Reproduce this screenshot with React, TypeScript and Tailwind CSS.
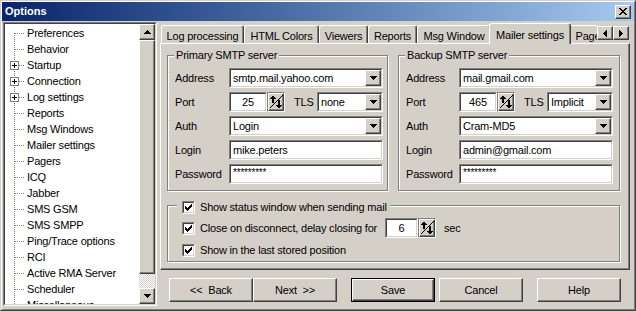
import React from 'react';

const raised =
  'border border-t-white border-l-white border-r-[#404040] border-b-[#404040] shadow-[inset_-1px_-1px_0_#808080] bg-[#d4d0c8]';
const etched = 'border border-[#808080] shadow-[inset_1px_1px_0_#fff,1px_1px_0_#fff]';

const treeItems: { label: string; plus?: boolean }[] = [
  { label: 'Preferences' },
  { label: 'Behavior' },
  { label: 'Startup', plus: true },
  { label: 'Connection', plus: true },
  { label: 'Log settings', plus: true },
  { label: 'Reports' },
  { label: 'Msg Windows' },
  { label: 'Mailer settings' },
  { label: 'Pagers' },
  { label: 'ICQ' },
  { label: 'Jabber' },
  { label: 'SMS GSM' },
  { label: 'SMS SMPP' },
  { label: 'Ping/Trace options' },
  { label: 'RCI' },
  { label: 'Active RMA Server' },
  { label: 'Scheduler' },
  { label: 'Miscellaneous' },
];

const tabs = [
  { label: 'Log processing', w: 'w-[83px]' },
  { label: 'HTML Colors', w: 'w-[75px]' },
  { label: 'Viewers', w: 'w-[49px]' },
  { label: 'Reports', w: 'w-[49px]' },
  { label: 'Msg Window', w: 'w-[74px]' },
  { label: 'Mailer settings', w: 'w-[82px]', active: true },
  { label: 'Page', w: 'w-[38px]' },
];

function Sunken({ className = '', inner = '', children }: { className?: string; inner?: string; children?: React.ReactNode }) {
  return (
    <div className={`border border-t-[#808080] border-l-[#808080] border-r-white border-b-white ${className}`}>
      <div className={`h-full border border-t-[#404040] border-l-[#404040] border-r-[#d4d0c8] border-b-[#d4d0c8] ${inner}`}>
        {children}
      </div>
    </div>
  );
}

function DownTri() {
  return (
    <svg width="7" height="4" viewBox="0 0 7 4" shapeRendering="crispEdges">
      <path d="M0 0h7v1H0zM1 1h5v1H1zM2 2h3v1H2zM3 3h1v1H3z" fill="#000" />
    </svg>
  );
}

function UpTri() {
  return (
    <svg width="7" height="4" viewBox="0 0 7 4" shapeRendering="crispEdges">
      <path d="M3 0h1v1H3zM2 1h3v1H2zM1 2h5v1H1zM0 3h7v1H0z" fill="#000" />
    </svg>
  );
}

function Combo({ value }: { value: string }) {
  return (
    <Sunken className="h-[20px] w-full" inner="bg-white flex items-center">
      <span className="flex-1 pl-[2px] leading-none truncate">{value}</span>
      <div className={`${raised} w-[16px] h-full flex items-center justify-center`}>
        <DownTri />
      </div>
    </Sunken>
  );
}

function Edit({ value, small }: { value: string; small?: boolean }) {
  return (
    <Sunken className="h-[20px] w-full" inner="bg-white flex items-center">
      <span className={`pl-[2px] leading-none ${small ? 'text-[10px] -mt-[3px]' : ''}`}>{value}</span>
    </Sunken>
  );
}

function SpinGlyph() {
  return (
    <svg width="14" height="14" viewBox="0 0 14 14" shapeRendering="crispEdges">
      <line x1="0.5" y1="13.5" x2="13.5" y2="0.5" stroke="#000" />
      <path d="M3 1h2v1H3zM2 2h4v1H2zM1 3h6v1H1zM3 4h2v4H3z" fill="#000" />
      <path d="M9 5h2v5H9zM7 10h6v1H7zM8 11h4v1H8zM9 12h2v1H9z" fill="#000" />
    </svg>
  );
}

function Spin({ value, editW }: { value: string; editW: string }) {
  return (
    <div className="flex h-[20px]">
      <Sunken className={`h-full ${editW}`} inner="bg-white flex items-center justify-center">
        <span className="leading-none">{value}</span>
      </Sunken>
      <div className="h-full w-[18px] border border-t-[#808080] border-l-[#808080] border-r-white border-b-white">
        <div className={`${raised} h-full flex items-center justify-center`}>
          <SpinGlyph />
        </div>
      </div>
    </div>
  );
}

function Check() {
  return (
    <Sunken className="w-[13px] h-[13px] shrink-0" inner="bg-white flex items-center justify-center">
      <svg width="7" height="7" viewBox="0 0 7 7" shapeRendering="crispEdges">
        <path d="M0 2h1v3H0zM1 3h1v3H1zM2 4h1v3H2zM3 3h1v3H3zM4 2h1v3H4zM5 1h1v3H5zM6 0h1v3H6z" fill="#000" />
      </svg>
    </Sunken>
  );
}

function ServerGroup({ title, address, port, tls, auth, login, labelW, width, pr }: {
  title: string; address: string; port: string; tls: string; auth: string; login: string; labelW: string; width: string; pr: string;
}) {
  return (
    <div className={`relative ${width} h-[136px] ${etched} pl-[7px] pt-[12px] ${pr}`}>
      <span className="absolute -top-[7px] left-[6px] px-[2px] bg-[#d4d0c8] leading-[13px]">{title}</span>
      <div className={`grid ${labelW} gap-y-[4px] items-center`}>
        <span>Address</span>
        <Combo value={address} />
        <span>Port</span>
        <div className="flex items-center">
          <Spin value={port} editW="w-[38px]" />
          <span className="ml-[9px]">TLS</span>
          <div className="ml-auto w-[66px]">
            <Combo value={tls} />
          </div>
        </div>
        <span>Auth</span>
        <Combo value={auth} />
        <span>Login</span>
        <Edit value={login} />
        <span>Password</span>
        <Edit value="*********" small />
      </div>
    </div>
  );
}

function TreeGutter({ first, plus }: { first: boolean; plus?: boolean }) {
  return (
    <svg width="22" height="16" viewBox="0 0 22 16" shapeRendering="crispEdges" className="shrink-0">
      <line x1="9.5" y1={first ? 8 : 0} x2="9.5" y2="16" stroke="#808080" strokeDasharray="1 1" />
      <line x1={plus ? 14 : 10} y1="8.5" x2="20" y2="8.5" stroke="#808080" strokeDasharray="1 1" />
      {plus && (
        <>
          <rect x="5.5" y="4.5" width="8" height="8" fill="#fff" stroke="#808080" />
          <rect x="7" y="8" width="5" height="1" fill="#000" />
          <rect x="9" y="6" width="1" height="5" fill="#000" />
        </>
      )}
    </svg>
  );
}

function Btn({ children, def }: { children: React.ReactNode; def?: boolean }) {
  const face = (
    <div className={`${raised} h-full w-full flex items-center justify-center whitespace-pre`}>{children}</div>
  );
  return (
    <div className={`w-[84px] h-[24px] ${def ? 'border border-black' : ''}`}>{face}</div>
  );
}

export default function App() {
  return (
    <div className="w-[636px] h-[311px] overflow-hidden bg-[#d4d0c8] text-[11px] tracking-[-0.2px] text-black [font-family:'Liberation_Sans',Arial,sans-serif] border border-t-[#d4d0c8] border-l-[#d4d0c8] border-r-[#404040] border-b-[#404040]">
      <div className="h-full flex flex-col border border-t-white border-l-white border-r-[#808080] border-b-[#808080]">
        {/* title bar */}
        <div className="h-[19px] shrink-0 flex items-center justify-between pl-[3px] pr-[3px] bg-linear-to-r from-[#0a246a] to-[#a6caf0]">
          <span className="text-white font-bold text-[11px] tracking-normal">Options</span>
          <div className={`${raised} w-[16px] h-[14px] flex items-center justify-center`}>
            <svg width="8" height="7" viewBox="0 0 8 7" shapeRendering="crispEdges">
              <path d="M0 0h2v1H0zM6 0h2v1H6zM1 1h2v1H1zM5 1h2v1H5zM2 2h4v1H2zM3 3h2v1H3zM2 4h4v1H2zM1 5h2v1H1zM5 5h2v1H5zM0 6h2v1H0zM6 6h2v1H6z" fill="#000" />
            </svg>
          </div>
        </div>

        <div className="flex pt-[1px] pl-[1px] gap-[3px]">
          {/* tree */}
          <Sunken className="w-[154px] h-[284px]" inner="bg-white flex">
            <div className="flex-1 overflow-hidden pt-[1px]">
              {treeItems.map((it, i) => (
                <div key={it.label} className="flex items-center h-[16px] whitespace-nowrap">
                  <TreeGutter first={i === 0} plus={it.plus} />
                  <span className="leading-none">{it.label}</span>
                </div>
              ))}
            </div>
            <div className="w-[16px] flex flex-col">
              <div className={`${raised} h-[16px] flex items-center justify-center`}>
                <UpTri />
              </div>
              <div className={`${raised} h-[234px]`} />
              <div className="h-[14px] bg-[repeating-conic-gradient(#d4d0c8_0_25%,#ffffff_0_50%)] bg-[length:2px_2px]" />
              <div className={`${raised} h-[16px] flex items-center justify-center`}>
                <DownTri />
              </div>
            </div>
          </Sunken>

          {/* right column */}
          <div className="w-[470px] flex flex-col">
            <div className="relative h-[21px] flex items-end pl-[1px]">
              {tabs.map(t =>
                t.active ? (
                  <div
                    key={t.label}
                    className={`${t.w} shrink-0 h-[21px] -mx-[2px] -mb-px relative z-10 bg-[#d4d0c8] border border-b-0 border-t-white border-l-white border-r-[#404040] rounded-t-[3px] shadow-[inset_-1px_0_0_#808080] flex justify-center pt-[3px] whitespace-nowrap`}
                  >
                    {t.label}
                  </div>
                ) : (
                  <div
                    key={t.label}
                    className={`${t.w} shrink-0 h-[18px] border border-b-0 border-t-white border-l-white border-r-[#404040] rounded-t-[3px] shadow-[inset_-1px_0_0_#808080] flex justify-center pt-[2px] whitespace-nowrap`}
                  >
                    {t.label}
                  </div>
                )
              )}
              <div className="absolute right-[1px] top-0 h-[21px] w-[32px] bg-[#d4d0c8] flex pt-[4px] z-20">
                <div className={`${raised} w-[16px] h-[14px] flex items-center justify-center`}>
                  <svg width="4" height="7" viewBox="0 0 4 7" shapeRendering="crispEdges">
                    <path d="M0 3h1v1H0zM1 2h1v3H1zM2 1h1v5H2zM3 0h1v7H3z" fill="#000" />
                  </svg>
                </div>
                <div className={`${raised} w-[16px] h-[14px] flex items-center justify-center`}>
                  <svg width="4" height="7" viewBox="0 0 4 7" shapeRendering="crispEdges">
                    <path d="M3 3h1v1H3zM2 2h1v3H2zM1 1h1v5H1zM0 0h1v7H0z" fill="#000" />
                  </svg>
                </div>
              </div>
            </div>

            {/* tab page */}
            <div className="h-[227px] border border-t-white border-l-white border-r-[#404040] border-b-[#404040] shadow-[inset_-1px_-1px_0_#808080] pt-[11px] pl-[6px]">
              <div className="flex gap-[10px]">
                <ServerGroup
                  title="Primary SMTP server"
                  address="smtp.mail.yahoo.com"
                  port="25"
                  tls="none"
                  auth="Login"
                  login="mike.peters"
                  labelW="grid-cols-[54px_1fr]"
                  width="w-[221px]"
                  pr="pr-[4px]"
                />
                <ServerGroup
                  title="Backup SMTP server"
                  address="mail.gmail.com"
                  port="465"
                  tls="Implicit"
                  auth="Cram-MD5"
                  login="admin@gmail.com"
                  labelW="grid-cols-[53px_1fr]"
                  width="w-[222px]"
                  pr="pr-[6px]"
                />
              </div>

              <div className={`relative w-[453px] h-[57px] mt-[14px] ${etched} pl-[14px] pt-[12px]`}>
                <div className="absolute -top-[5px] left-[9px] flex items-center bg-[#d4d0c8] pl-[5px] pr-[3px]">
                  <Check />
                  <span className="ml-[5px] leading-none">Show status window when sending mail</span>
                </div>
                <div className="flex items-center h-[20px]">
                  <Check />
                  <span className="ml-[5px] w-[185px] whitespace-nowrap">Close on disconnect, delay closing for</span>
                  <Spin value="6" editW="w-[33px]" />
                  <span className="ml-[8px]">sec</span>
                </div>
                <div className="flex items-center h-[13px] mt-[6px]">
                  <Check />
                  <span className="ml-[5px]">Show in the last stored position</span>
                </div>
              </div>
            </div>

            {/* buttons */}
            <div className="flex mt-[8px] pl-[9px]">
              <Btn>{'<<  Back'}</Btn>
              <Btn>{'Next  >>'}</Btn>
              <div className="ml-[14px]">
                <Btn def>Save</Btn>
              </div>
              <div className="ml-[4px]">
                <Btn>Cancel</Btn>
              </div>
              <div className="ml-[14px]">
                <Btn>Help</Btn>
              </div>
            </div>
          </div>
        </div>
      </div>
    </div>
  );
}
